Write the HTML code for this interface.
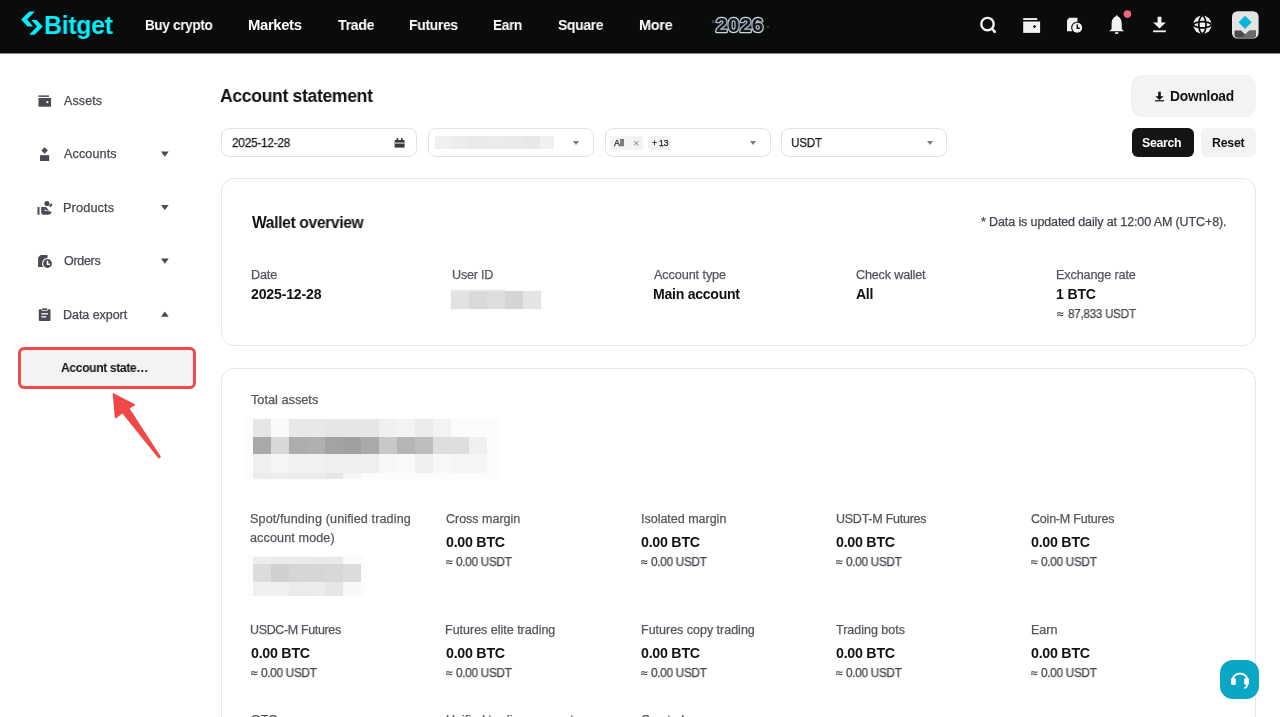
<!DOCTYPE html>
<html><head><meta charset="utf-8"><title>Account statement</title>
<style>
html,body{margin:0;padding:0;background:#fff;}
body{width:1280px;height:717px;overflow:hidden;position:relative;font-family:"Liberation Sans",sans-serif;}
.t{position:absolute;line-height:1;white-space:nowrap;will-change:transform;}
#hdr{position:absolute;left:0;top:0;width:1280px;height:53px;background:#0a0b0b;}
</style></head><body>
<div id="hdr"></div>
<div style="position:absolute;left:0;top:53px;width:1280px;height:1px;background:#8a8a8a"></div>
<div style="position:absolute;left:0;top:55px;width:1280px;height:1px;background:#f8f8f8"></div>
<svg style="position:absolute;left:0;top:0" width="130" height="53" viewBox="0 0 130 53">
<path fill="#00f0ff" d="M29.3 11.5 L34.8 11.5 L27.1 19.4 L33.1 26.4 L27.6 26.4 L21.2 19.4 Z M31.3 20.1 L36.6 20.1 L42.8 26.4 L34.6 34.7 L29.2 34.7 L37.1 26.4 Z"/>
</svg>
<div class="t" style="left:44.00px;top:13px;font-size:25.44px;font-weight:700;color:#00f0ff;letter-spacing:-0.35px;transform:scaleX(0.9817);transform-origin:0 0;">Bitget</div>
<div class="t" style="left:145.10px;top:18px;font-size:14.83px;font-weight:700;color:#ffffff;letter-spacing:-0.35px;transform:scaleX(0.9115);transform-origin:0 0;">Buy crypto</div>
<div class="t" style="left:248.40px;top:18px;font-size:14.83px;font-weight:700;color:#ffffff;letter-spacing:-0.35px;transform:scaleX(0.9942);transform-origin:0 0;">Markets</div>
<div class="t" style="left:337.50px;top:18px;font-size:14.83px;font-weight:700;color:#ffffff;letter-spacing:-0.35px;transform:scaleX(0.9548);transform-origin:0 0;">Trade</div>
<div class="t" style="left:409.00px;top:18px;font-size:14.83px;font-weight:700;color:#ffffff;letter-spacing:-0.35px;transform:scaleX(0.9391);transform-origin:0 0;">Futures</div>
<div class="t" style="left:493.40px;top:18px;font-size:14.83px;font-weight:700;color:#ffffff;letter-spacing:-0.35px;transform:scaleX(0.9182);transform-origin:0 0;">Earn</div>
<div class="t" style="left:557.75px;top:18px;font-size:14.83px;font-weight:700;color:#ffffff;letter-spacing:-0.35px;transform:scaleX(0.9386);transform-origin:0 0;">Square</div>
<div class="t" style="left:638.70px;top:18px;font-size:14.83px;font-weight:700;color:#ffffff;letter-spacing:-0.35px;transform:scaleX(0.9772);transform-origin:0 0;">More</div>
<svg style="position:absolute;left:700px;top:0;will-change:transform" width="80" height="53" viewBox="700 0 80 53">
<defs><linearGradient id="chr" x1="0" y1="0" x2="0" y2="1"><stop offset="0" stop-color="#e6ecf0"/><stop offset="0.5" stop-color="#9fb0bd"/><stop offset="1" stop-color="#dfe6ea"/></linearGradient></defs>
<text x="715.8" y="32" font-family="Liberation Sans" font-weight="700" font-size="21" letter-spacing="0.3" fill="#17191d" stroke="url(#chr)" stroke-width="2.6" stroke-linejoin="round" paint-order="stroke">2026</text>
<circle cx="713.2" cy="21.8" r="1.6" fill="#4a3a8a" opacity="0.8"/>
<circle cx="768" cy="27" r="1.2" fill="#555" opacity="0.6"/>
</svg>
<svg style="position:absolute;left:960px;top:0" width="320" height="53" viewBox="960 0 320 53">
<circle cx="987.5" cy="24.1" r="6.2" fill="none" stroke="#f2f2f4" stroke-width="2.4"/>
<path d="M992.2 28.8 L994.8 31.9" stroke="#f2f2f4" stroke-width="2.5" stroke-linecap="round"/>
<rect x="1023.2" y="18.1" width="14" height="1.9" fill="#f2f2f4"/>
<rect x="1023.2" y="21.5" width="16.9" height="11.4" fill="#f2f2f4"/>
<rect x="1033.3" y="25.4" width="2.4" height="2.4" transform="rotate(45 1034.5 26.6)" fill="#0a0b0b"/>
<path d="M1069.2 17.7 H1077.4 V21.65 A6.05 6.05 0 0 0 1072.3 31.2 H1067 V20.3 Z" fill="#f2f2f4"/>
<circle cx="1077.2" cy="27.7" r="4.95" fill="#f2f2f4"/>
<path d="M1077.3 24.4 V28.2 H1079.8" stroke="#0a0b0b" stroke-width="1.5" fill="none"/>
<path d="M1116.7 16 C1113 17 1111.6 20 1111.6 24.5 L1111.6 29 L1109.3 31.3 L1124 31.3 L1121.8 29 L1121.8 24.5 C1121.8 20 1120.4 17 1116.7 16 Z" fill="#f2f2f4"/>
<path d="M1114.8 32.2 A1.9 1.9 0 0 0 1118.6 32.2 Z" fill="#f2f2f4"/>
<rect x="1116" y="15.3" width="1.5" height="2" rx="0.5" fill="#f2f2f4"/>
<circle cx="1127.4" cy="14.1" r="3.8" fill="#f2657e"/>
<path d="M1157.6 16.7 H1161.4 V22.5 H1165.8 L1159.5 28.4 L1153.2 22.5 H1157.6 Z" fill="#f2f2f4"/>
<rect x="1153.1" y="30.4" width="12.8" height="1.8" fill="#f2f2f4"/>
<circle cx="1202.4" cy="24.7" r="9.15" fill="#f2f2f4"/>
<path d="M1202.4 15.4 C1197.6 18.6 1197.6 30.8 1202.4 34 M1202.4 15.4 C1207.2 18.6 1207.2 30.8 1202.4 34 M1193.1 24.7 C1196.4 20.6 1208.4 20.6 1211.7 24.7 M1193.1 24.7 C1196.4 28.8 1208.4 28.8 1211.7 24.7" stroke="#0a0b0b" stroke-width="1.7" fill="none"/>
<rect x="1232" y="11.2" width="26.6" height="27.4" rx="5.5" fill="#e4e4e4"/>
<path d="M1234.5 30.4 H1241 L1245.3 34.6 L1249.6 30.4 H1256 V35 Q1256 37.8 1253.2 37.8 H1237.2 Q1234.5 37.8 1234.5 35 Z" fill="#4a4a4a"/>
<path d="M1241.2 37.8 L1249.6 30.4 H1256 V35 Q1256 37.8 1253.2 37.8 Z" fill="#6a6a6a"/>
<path d="M1245.1 15.7 L1251.7 22.3 L1245.1 28.9 L1238.5 22.3 Z" fill="#0ab6d8"/>
</svg>
<div class="t" style="left:63.90px;top:95px;font-size:12.5px;-webkit-text-stroke:0.25px #46474e;color:#46474e;letter-spacing:0.1px;">Assets</div>
<div class="t" style="left:63.90px;top:148px;font-size:12.5px;-webkit-text-stroke:0.25px #46474e;color:#46474e;letter-spacing:0.12px;transform:scaleX(1.005);transform-origin:0 0;">Accounts</div>
<div class="t" style="left:62.90px;top:202px;font-size:12.5px;-webkit-text-stroke:0.25px #46474e;color:#46474e;letter-spacing:0.12px;transform:scaleX(1.0197);transform-origin:0 0;">Products</div>
<div class="t" style="left:63.90px;top:255px;font-size:12.5px;-webkit-text-stroke:0.25px #46474e;color:#46474e;letter-spacing:-0.3px;">Orders</div>
<div class="t" style="left:63.20px;top:309px;font-size:12.5px;-webkit-text-stroke:0.25px #46474e;color:#46474e;letter-spacing:-0.04px;">Data export</div>
<svg style="position:absolute;left:0;top:53px" width="210" height="420" viewBox="0 53 210 420">
<g fill="#4a4a52">
<rect x="38.5" y="95.4" width="10.6" height="1.5"/>
<rect x="38.5" y="98" width="12.6" height="8.7"/>
</g>
<rect x="46.4" y="101.2" width="1.9" height="1.9" fill="#fff"/>
<path d="M44.6 147.2 L47.9 150.5 L44.6 153.8 L41.3 150.5 Z" fill="#4a4a52"/>
<rect x="40" y="155.2" width="9.2" height="5.8" fill="#4a4a52"/>
<path d="M161 151.4 H168.7 L164.85 156.7 Z" fill="#4a4a52"/>
<path d="M161 204.9 H168.7 L164.85 210.2 Z" fill="#4a4a52"/>
<path d="M161 258.4 H168.7 L164.85 263.7 Z" fill="#4a4a52"/>
<path d="M161 316.8 H168.7 L164.85 311.5 Z" fill="#4a4a52"/>
<g fill="#4a4a52">
<rect x="37.5" y="207.1" width="2" height="7.6" rx="0.3"/>
<circle cx="47" cy="203.5" r="2.6"/>
<ellipse cx="50.8" cy="205.3" rx="1.15" ry="1.9" transform="rotate(40 50.8 205.3)"/>
<path d="M41.2 207.1 L45.8 207.1 L48.8 210.2 L48.3 210.9 L44.6 209.4 Q44 209.3 44.1 209.9 Q44.3 210.5 45 210.8 L51.7 211.8 Q51 214.7 48 214.7 L43.4 214.7 Q41.2 214.7 41.2 212.5 Z"/>
</g>
<path d="M40.6 255.1 H47.5 V258.1 A5.4 5.4 0 0 0 43.3 266.9 H38.1 V257.6 Z" fill="#4a4a52"/>
<circle cx="47.5" cy="263.5" r="4.4" fill="#4a4a52"/>
<path d="M47.5 260.6 V264.3 H50" stroke="#fff" stroke-width="1.5" fill="none"/>
<rect x="38.8" y="309.3" width="11.7" height="11.7" rx="1" fill="#4a4a52"/>
<rect x="41.8" y="308" width="5.7" height="2.6" rx="0.6" fill="#4a4a52" stroke="#fff" stroke-width="0.8"/>
<rect x="41.3" y="313.2" width="6.8" height="1.3" fill="#fff"/>
<rect x="41.3" y="316.2" width="4.8" height="1.3" fill="#fff"/>
<path d="M112.6 392.8 L134.8 404.2 Q135.6 404.8 134.8 405.4 L129.6 408.4 L160.8 456.6 Q160.6 458.6 158.6 458.6 L122.4 413.4 L116 418.2 Q115 418.6 114.8 417.6 Z" fill="#f04848"/>
</svg>
<div style="position:absolute;left:18.2px;top:347.3px;width:171.7px;height:35.3px;border:3px solid #f04a4a;border-radius:6px;background:#f3f3f5"></div>
<div class="t" style="left:61.10px;top:362px;font-size:12.65px;font-weight:700;color:#111111;letter-spacing:-0.35px;transform:scaleX(0.953);transform-origin:0 0;">Account state…</div>
<div class="t" style="left:220.00px;top:87px;font-size:18.46px;font-weight:700;color:#121212;letter-spacing:-0.35px;transform:scaleX(0.9536);transform-origin:0 0;">Account statement</div>
<div style="position:absolute;left:1130.5px;top:75px;width:125.4px;height:42.3px;border-radius:11px;background:#f3f3f5"></div>
<svg style="position:absolute;left:1150px;top:85px" width="20" height="20" viewBox="1150 85 20 20">
<path d="M1158.2 91.8 H1160.8 V96.2 H1163.6 L1159.5 100 L1155.4 96.2 H1158.2 Z" fill="#121212"/>
<rect x="1155" y="100.2" width="9" height="1.2" fill="#121212"/>
</svg>
<div class="t" style="left:1169.90px;top:90px;font-size:13.81px;font-weight:700;color:#121212;letter-spacing:-0.243px;">Download</div>
<div style="position:absolute;left:221.4px;top:128.3px;width:193.90px;height:26.40px;border:1px solid #e3e3e6;border-radius:8px;background:#fff"></div>
<div style="position:absolute;left:428.1px;top:128.3px;width:163.70px;height:26.40px;border:1px solid #e3e3e6;border-radius:8px;background:#fff"></div>
<div style="position:absolute;left:605px;top:128.3px;width:164.00px;height:26.40px;border:1px solid #e3e3e6;border-radius:8px;background:#fff"></div>
<div style="position:absolute;left:781.3px;top:128.3px;width:163.50px;height:26.40px;border:1px solid #e3e3e6;border-radius:8px;background:#fff"></div>
<div class="t" style="left:231.75px;top:136px;font-size:13.37px;-webkit-text-stroke:0.25px #1a1a1a;color:#1a1a1a;letter-spacing:-0.35px;transform:scaleX(0.8944);transform-origin:0 0;">2025-12-28</div>
<svg style="position:absolute;left:390px;top:133px" width="20" height="20" viewBox="390 133 20 20">
<rect x="394.6" y="140" width="10" height="7.6" fill="#3a3a40"/>
<rect x="394.6" y="142.6" width="10" height="0.9" fill="#fff"/>
<rect x="396.6" y="138" width="1.6" height="2.4" fill="#3a3a40"/>
<rect x="401" y="138" width="1.6" height="2.4" fill="#3a3a40"/>
</svg>
<div style="position:absolute;left:435.2px;top:135.6px;width:16.80000000000001px;height:13.3px;background:#efefef"></div>
<div style="position:absolute;left:452px;top:135.6px;width:16px;height:13.3px;background:#ececec"></div>
<div style="position:absolute;left:468px;top:135.6px;width:19px;height:13.3px;background:#e9e9e9"></div>
<div style="position:absolute;left:487px;top:135.6px;width:18px;height:13.3px;background:#ebebeb"></div>
<div style="position:absolute;left:505px;top:135.6px;width:18px;height:13.3px;background:#eaeaea"></div>
<div style="position:absolute;left:523px;top:135.6px;width:17px;height:13.3px;background:#e8e8e8"></div>
<div style="position:absolute;left:540px;top:135.6px;width:14px;height:13.3px;background:#f0f0f0"></div>
<svg style="position:absolute;left:573px;top:140.6px" width="6" height="4" viewBox="0 0 6 4"><path d="M0 0 H6 L3.0 4 Z" fill="#7a7a80"/></svg>
<svg style="position:absolute;left:749.8px;top:140.6px" width="6" height="4" viewBox="0 0 6 4"><path d="M0 0 H6 L3.0 4 Z" fill="#7a7a80"/></svg>
<svg style="position:absolute;left:926.5px;top:140.6px" width="6" height="4" viewBox="0 0 6 4"><path d="M0 0 H6 L3.0 4 Z" fill="#7a7a80"/></svg>
<div style="position:absolute;left:610.2px;top:136px;width:32.4px;height:13.6px;border-radius:3px;background:#f3f3f5"></div>
<div style="position:absolute;left:648.4px;top:136px;width:23.1px;height:13.6px;border-radius:3px;background:#f3f3f5"></div>
<div class="t" style="left:613.90px;top:139px;font-size:8.58px;-webkit-text-stroke:0.25px #1a1a1a;color:#1a1a1a;letter-spacing:0.12px;transform:scaleX(1.0281);transform-origin:0 0;">All</div>
<svg style="position:absolute;left:633px;top:140px" width="8" height="7" viewBox="633 140 8 7">
<path d="M634 141 L638.6 145.4 M638.6 141 L634 145.4" stroke="#777" stroke-width="0.9"/>
</svg>
<div class="t" style="left:651.50px;top:139px;font-size:8.58px;-webkit-text-stroke:0.25px #1a1a1a;color:#1a1a1a;letter-spacing:-0.167px;">+ 13</div>
<div class="t" style="left:790.84px;top:136px;font-size:13.3px;-webkit-text-stroke:0.25px #1a1a1a;color:#1a1a1a;letter-spacing:-0.35px;transform:scaleX(0.8854);transform-origin:0 0;">USDT</div>
<div style="position:absolute;left:1132.3px;top:128.4px;width:61.3px;height:28.2px;border-radius:6px;background:#141414"></div>
<div style="position:absolute;left:1201.1px;top:128.4px;width:54.8px;height:28.2px;border-radius:6px;background:#f3f3f5"></div>
<div class="t" style="left:1142.40px;top:137px;font-size:12.35px;font-weight:700;color:#ffffff;letter-spacing:-0.32px;">Search</div>
<div class="t" style="left:1212.00px;top:137px;font-size:12.35px;font-weight:700;color:#121212;letter-spacing:-0.25px;">Reset</div>
<div style="position:absolute;left:221.4px;top:178.4px;width:1032.6px;height:165.6px;border:1px solid #e5e6e8;border-radius:13px"></div>
<div style="position:absolute;left:221.4px;top:367.5px;width:1032.6px;height:500px;border:1px solid #e5e6e8;border-radius:13px"></div>
<div class="t" style="left:251.60px;top:215px;font-size:15.7px;font-weight:700;color:#121212;letter-spacing:-0.35px;transform:scaleX(0.9946);transform-origin:0 0;">Wallet overview</div>
<div class="t" style="left:981.30px;top:216px;font-size:12.5px;-webkit-text-stroke:0.25px #45454d;color:#45454d;letter-spacing:-0.116px;">* Data is updated daily at 12:00 AM (UTC+8).</div>
<div class="t" style="left:250.50px;top:269px;font-size:12.65px;-webkit-text-stroke:0.25px #55565d;color:#55565d;letter-spacing:-0.167px;">Date</div>
<div class="t" style="left:451.50px;top:269px;font-size:12.65px;-webkit-text-stroke:0.25px #55565d;color:#55565d;letter-spacing:-0.25px;">User ID</div>
<div class="t" style="left:654.25px;top:269px;font-size:12.65px;-webkit-text-stroke:0.25px #55565d;color:#55565d;letter-spacing:-0.091px;">Account type</div>
<div class="t" style="left:855.80px;top:269px;font-size:12.65px;-webkit-text-stroke:0.25px #55565d;color:#55565d;letter-spacing:-0.191px;">Check wallet</div>
<div class="t" style="left:1056.30px;top:269px;font-size:12.65px;-webkit-text-stroke:0.25px #55565d;color:#55565d;letter-spacing:-0.142px;">Exchange rate</div>
<div class="t" style="left:251.30px;top:287px;font-size:14.1px;font-weight:700;color:#121212;letter-spacing:-0.178px;">2025-12-28</div>
<div class="t" style="left:653.00px;top:287px;font-size:14.1px;font-weight:700;color:#121212;letter-spacing:-0.273px;">Main account</div>
<div class="t" style="left:856.00px;top:287px;font-size:14.1px;font-weight:700;color:#121212;letter-spacing:-0.35px;transform:scaleX(0.9816);transform-origin:0 0;">All</div>
<div class="t" style="left:1056.00px;top:287px;font-size:14.1px;font-weight:700;color:#121212;letter-spacing:-0.175px;">1 BTC</div>
<div class="t" style="left:1057.10px;top:308px;font-size:12.06px;-webkit-text-stroke:0.25px #46474e;color:#46474e;letter-spacing:0.12px;transform:scaleX(1.0333);transform-origin:0 0;">≈</div>
<div class="t" style="left:1067.50px;top:308px;font-size:12.79px;-webkit-text-stroke:0.25px #46474e;color:#46474e;letter-spacing:-0.35px;transform:scaleX(0.9195);transform-origin:0 0;">87,833 USDT</div>
<div style="position:absolute;left:450px;top:288.6px;width:93px;height:22px;background:#fcfcfc"></div>
<div style="position:absolute;left:451.2px;top:289.2px;width:53.6px;height:1.8px;background:#f0f0f0"></div>
<div style="position:absolute;left:451.3px;top:290.9px;width:18.0px;height:18.1px;background:#e2e2e2"></div>
<div style="position:absolute;left:469.3px;top:290.9px;width:18.0px;height:18.1px;background:#d9d9d9"></div>
<div style="position:absolute;left:487.3px;top:290.9px;width:18.0px;height:18.1px;background:#dddddd"></div>
<div style="position:absolute;left:505.3px;top:290.9px;width:18.0px;height:18.1px;background:#d4d4d4"></div>
<div style="position:absolute;left:523.3px;top:290.9px;width:18.0px;height:18.1px;background:#e4e4e4"></div>
<div class="t" style="left:251.30px;top:394px;font-size:12.79px;-webkit-text-stroke:0.25px #55565d;color:#55565d;letter-spacing:-0.018px;">Total assets</div>
<div style="position:absolute;left:244px;top:418px;width:256px;height:62px;background:#fcfcfc"></div>
<div style="position:absolute;left:252.50px;top:419.3px;width:18.33px;height:17.60px;background:#e6e6e6"></div>
<div style="position:absolute;left:270.53px;top:419.3px;width:18.33px;height:17.60px;background:#fafafa"></div>
<div style="position:absolute;left:288.56px;top:419.3px;width:18.33px;height:17.60px;background:#e8e8e8"></div>
<div style="position:absolute;left:306.59px;top:419.3px;width:18.33px;height:17.60px;background:#e8e8e8"></div>
<div style="position:absolute;left:324.62px;top:419.3px;width:18.33px;height:17.60px;background:#e6e6e6"></div>
<div style="position:absolute;left:342.65px;top:419.3px;width:18.33px;height:17.60px;background:#e6e6e6"></div>
<div style="position:absolute;left:360.68px;top:419.3px;width:18.33px;height:17.60px;background:#e6e6e6"></div>
<div style="position:absolute;left:378.72px;top:419.3px;width:18.33px;height:17.60px;background:#f0f0f0"></div>
<div style="position:absolute;left:396.75px;top:419.3px;width:18.33px;height:17.60px;background:#f3f3f3"></div>
<div style="position:absolute;left:414.78px;top:419.3px;width:18.33px;height:17.60px;background:#ebebeb"></div>
<div style="position:absolute;left:432.81px;top:419.3px;width:18.33px;height:17.60px;background:#f3f3f3"></div>
<div style="position:absolute;left:450.84px;top:419.3px;width:18.33px;height:17.60px;background:#fcfcfc"></div>
<div style="position:absolute;left:252.50px;top:436.6px;width:18.33px;height:18.10px;background:#a9a9a9"></div>
<div style="position:absolute;left:270.53px;top:436.6px;width:18.33px;height:18.10px;background:#d8d8d8"></div>
<div style="position:absolute;left:288.56px;top:436.6px;width:18.33px;height:18.10px;background:#adadad"></div>
<div style="position:absolute;left:306.59px;top:436.6px;width:18.33px;height:18.10px;background:#b0b0b0"></div>
<div style="position:absolute;left:324.62px;top:436.6px;width:18.33px;height:18.10px;background:#a3a3a3"></div>
<div style="position:absolute;left:342.65px;top:436.6px;width:18.33px;height:18.10px;background:#a0a0a0"></div>
<div style="position:absolute;left:360.68px;top:436.6px;width:18.33px;height:18.10px;background:#aaaaaa"></div>
<div style="position:absolute;left:378.72px;top:436.6px;width:18.33px;height:18.10px;background:#c8c8c8"></div>
<div style="position:absolute;left:396.75px;top:436.6px;width:18.33px;height:18.10px;background:#b5b5b5"></div>
<div style="position:absolute;left:414.78px;top:436.6px;width:18.33px;height:18.10px;background:#bdbdbd"></div>
<div style="position:absolute;left:432.81px;top:436.6px;width:18.33px;height:18.10px;background:#dedede"></div>
<div style="position:absolute;left:450.84px;top:436.6px;width:18.33px;height:18.10px;background:#dedede"></div>
<div style="position:absolute;left:468.87px;top:436.6px;width:18.33px;height:18.10px;background:#f0f0f0"></div>
<div style="position:absolute;left:252.50px;top:454.4px;width:18.33px;height:18.40px;background:#efefef"></div>
<div style="position:absolute;left:270.53px;top:454.4px;width:18.33px;height:18.40px;background:#f5f5f5"></div>
<div style="position:absolute;left:288.56px;top:454.4px;width:18.33px;height:18.40px;background:#f2f2f2"></div>
<div style="position:absolute;left:306.59px;top:454.4px;width:18.33px;height:18.40px;background:#f1f1f1"></div>
<div style="position:absolute;left:324.62px;top:454.4px;width:18.33px;height:18.40px;background:#efefef"></div>
<div style="position:absolute;left:342.65px;top:454.4px;width:18.33px;height:18.40px;background:#efefef"></div>
<div style="position:absolute;left:360.68px;top:454.4px;width:18.33px;height:18.40px;background:#efefef"></div>
<div style="position:absolute;left:378.72px;top:454.4px;width:18.33px;height:18.40px;background:#f8f8f8"></div>
<div style="position:absolute;left:396.75px;top:454.4px;width:18.33px;height:18.40px;background:#fafafa"></div>
<div style="position:absolute;left:414.78px;top:454.4px;width:18.33px;height:18.40px;background:#efefef"></div>
<div style="position:absolute;left:432.81px;top:454.4px;width:18.33px;height:18.40px;background:#f8f8f8"></div>
<div style="position:absolute;left:450.84px;top:454.4px;width:18.33px;height:18.40px;background:#f5f5f5"></div>
<div style="position:absolute;left:468.87px;top:454.4px;width:18.33px;height:18.40px;background:#f6f6f6"></div>
<div style="position:absolute;left:252.50px;top:472.5px;width:18.33px;height:6.10px;background:#ececec"></div>
<div style="position:absolute;left:270.53px;top:472.5px;width:18.33px;height:6.10px;background:#ececec"></div>
<div style="position:absolute;left:288.56px;top:472.5px;width:18.33px;height:6.10px;background:#ececec"></div>
<div style="position:absolute;left:306.59px;top:472.5px;width:18.33px;height:6.10px;background:#ececec"></div>
<div style="position:absolute;left:324.62px;top:472.5px;width:18.33px;height:6.10px;background:#e6e6e6"></div>
<div style="position:absolute;left:342.65px;top:472.5px;width:18.33px;height:6.10px;background:#f5f5f5"></div>
<div style="position:absolute;left:248px;top:555px;width:118px;height:42px;background:#fcfcfc"></div>
<div style="position:absolute;left:252.50px;top:557px;width:18.35px;height:7.30px;background:#ececec"></div>
<div style="position:absolute;left:270.55px;top:557px;width:18.35px;height:7.30px;background:#ebebeb"></div>
<div style="position:absolute;left:288.60px;top:557px;width:18.35px;height:7.30px;background:#ebebeb"></div>
<div style="position:absolute;left:306.65px;top:557px;width:18.35px;height:7.30px;background:#e8e8e8"></div>
<div style="position:absolute;left:324.70px;top:557px;width:18.35px;height:7.30px;background:#e9e9e9"></div>
<div style="position:absolute;left:342.75px;top:557px;width:18.35px;height:7.30px;background:#fafafa"></div>
<div style="position:absolute;left:252.50px;top:564px;width:18.35px;height:17.90px;background:#dcdcdc"></div>
<div style="position:absolute;left:270.55px;top:564px;width:18.35px;height:17.90px;background:#d0d0d0"></div>
<div style="position:absolute;left:288.60px;top:564px;width:18.35px;height:17.90px;background:#d6d6d6"></div>
<div style="position:absolute;left:306.65px;top:564px;width:18.35px;height:17.90px;background:#d6d6d6"></div>
<div style="position:absolute;left:324.70px;top:564px;width:18.35px;height:17.90px;background:#d8d8d8"></div>
<div style="position:absolute;left:342.75px;top:564px;width:18.35px;height:17.90px;background:#dcdcdc"></div>
<div style="position:absolute;left:252.50px;top:581.6px;width:18.35px;height:14.00px;background:#f0f0f0"></div>
<div style="position:absolute;left:270.55px;top:581.6px;width:18.35px;height:14.00px;background:#f0f0f0"></div>
<div style="position:absolute;left:288.60px;top:581.6px;width:18.35px;height:14.00px;background:#ebebeb"></div>
<div style="position:absolute;left:306.65px;top:581.6px;width:18.35px;height:14.00px;background:#ececec"></div>
<div style="position:absolute;left:324.70px;top:581.6px;width:18.35px;height:14.00px;background:#e6e6e6"></div>
<div style="position:absolute;left:342.75px;top:581.6px;width:18.35px;height:14.00px;background:#f8f8f8"></div>
<div class="t" style="left:249.90px;top:513px;font-size:12.5px;-webkit-text-stroke:0.25px #55565d;color:#55565d;letter-spacing:0.12px;transform:scaleX(1.0066);transform-origin:0 0;">Spot/funding (unified trading</div>
<div class="t" style="left:249.90px;top:532px;font-size:12.5px;-webkit-text-stroke:0.25px #55565d;color:#55565d;letter-spacing:0.12px;transform:scaleX(1.0066);transform-origin:0 0;">account mode)</div>
<div class="t" style="left:445.90px;top:513px;font-size:12.5px;-webkit-text-stroke:0.25px #55565d;color:#55565d;letter-spacing:-0.009px;">Cross margin</div>
<div class="t" style="left:445.60px;top:535px;font-size:14.24px;font-weight:700;color:#121212;letter-spacing:-0.257px;">0.00 BTC</div>
<div class="t" style="left:446.20px;top:556px;font-size:12.06px;-webkit-text-stroke:0.25px #46474e;color:#46474e;letter-spacing:0.12px;transform:scaleX(1.0333);transform-origin:0 0;">≈</div>
<div class="t" style="left:456.30px;top:556px;font-size:12.06px;-webkit-text-stroke:0.25px #46474e;color:#46474e;letter-spacing:-0.35px;transform:scaleX(0.9843);transform-origin:0 0;">0.00 USDT</div>
<div class="t" style="left:641.30px;top:513px;font-size:12.5px;-webkit-text-stroke:0.25px #55565d;color:#55565d;letter-spacing:-0.009px;">Isolated margin</div>
<div class="t" style="left:640.60px;top:535px;font-size:14.24px;font-weight:700;color:#121212;letter-spacing:-0.257px;">0.00 BTC</div>
<div class="t" style="left:641.20px;top:556px;font-size:12.06px;-webkit-text-stroke:0.25px #46474e;color:#46474e;letter-spacing:0.12px;transform:scaleX(1.0333);transform-origin:0 0;">≈</div>
<div class="t" style="left:651.30px;top:556px;font-size:12.06px;-webkit-text-stroke:0.25px #46474e;color:#46474e;letter-spacing:-0.35px;transform:scaleX(0.9843);transform-origin:0 0;">0.00 USDT</div>
<div class="t" style="left:836.00px;top:513px;font-size:12.5px;-webkit-text-stroke:0.25px #55565d;color:#55565d;letter-spacing:-0.249px;">USDT-M Futures</div>
<div class="t" style="left:835.60px;top:535px;font-size:14.24px;font-weight:700;color:#121212;letter-spacing:-0.257px;">0.00 BTC</div>
<div class="t" style="left:836.20px;top:556px;font-size:12.06px;-webkit-text-stroke:0.25px #46474e;color:#46474e;letter-spacing:0.12px;transform:scaleX(1.0333);transform-origin:0 0;">≈</div>
<div class="t" style="left:846.30px;top:556px;font-size:12.06px;-webkit-text-stroke:0.25px #46474e;color:#46474e;letter-spacing:-0.35px;transform:scaleX(0.9843);transform-origin:0 0;">0.00 USDT</div>
<div class="t" style="left:1031.20px;top:513px;font-size:12.5px;-webkit-text-stroke:0.25px #55565d;color:#55565d;letter-spacing:-0.209px;">Coin-M Futures</div>
<div class="t" style="left:1030.60px;top:535px;font-size:14.24px;font-weight:700;color:#121212;letter-spacing:-0.257px;">0.00 BTC</div>
<div class="t" style="left:1031.20px;top:556px;font-size:12.06px;-webkit-text-stroke:0.25px #46474e;color:#46474e;letter-spacing:0.12px;transform:scaleX(1.0333);transform-origin:0 0;">≈</div>
<div class="t" style="left:1041.30px;top:556px;font-size:12.06px;-webkit-text-stroke:0.25px #46474e;color:#46474e;letter-spacing:-0.35px;transform:scaleX(0.9843);transform-origin:0 0;">0.00 USDT</div>
<div class="t" style="left:250.10px;top:624px;font-size:12.5px;-webkit-text-stroke:0.25px #55565d;color:#55565d;letter-spacing:-0.359px;">USDC-M Futures</div>
<div class="t" style="left:250.60px;top:646px;font-size:14.24px;font-weight:700;color:#121212;letter-spacing:-0.257px;">0.00 BTC</div>
<div class="t" style="left:251.20px;top:667px;font-size:12.06px;-webkit-text-stroke:0.25px #46474e;color:#46474e;letter-spacing:0.12px;transform:scaleX(1.0333);transform-origin:0 0;">≈</div>
<div class="t" style="left:261.30px;top:667px;font-size:12.06px;-webkit-text-stroke:0.25px #46474e;color:#46474e;letter-spacing:-0.35px;transform:scaleX(0.9843);transform-origin:0 0;">0.00 USDT</div>
<div class="t" style="left:445.10px;top:624px;font-size:12.5px;-webkit-text-stroke:0.25px #55565d;color:#55565d;letter-spacing:-0.009px;">Futures elite trading</div>
<div class="t" style="left:445.60px;top:646px;font-size:14.24px;font-weight:700;color:#121212;letter-spacing:-0.257px;">0.00 BTC</div>
<div class="t" style="left:446.20px;top:667px;font-size:12.06px;-webkit-text-stroke:0.25px #46474e;color:#46474e;letter-spacing:0.12px;transform:scaleX(1.0333);transform-origin:0 0;">≈</div>
<div class="t" style="left:456.30px;top:667px;font-size:12.06px;-webkit-text-stroke:0.25px #46474e;color:#46474e;letter-spacing:-0.35px;transform:scaleX(0.9843);transform-origin:0 0;">0.00 USDT</div>
<div class="t" style="left:641.00px;top:624px;font-size:12.5px;-webkit-text-stroke:0.25px #55565d;color:#55565d;letter-spacing:-0.009px;">Futures copy trading</div>
<div class="t" style="left:640.60px;top:646px;font-size:14.24px;font-weight:700;color:#121212;letter-spacing:-0.257px;">0.00 BTC</div>
<div class="t" style="left:641.20px;top:667px;font-size:12.06px;-webkit-text-stroke:0.25px #46474e;color:#46474e;letter-spacing:0.12px;transform:scaleX(1.0333);transform-origin:0 0;">≈</div>
<div class="t" style="left:651.30px;top:667px;font-size:12.06px;-webkit-text-stroke:0.25px #46474e;color:#46474e;letter-spacing:-0.35px;transform:scaleX(0.9843);transform-origin:0 0;">0.00 USDT</div>
<div class="t" style="left:836.30px;top:624px;font-size:12.5px;-webkit-text-stroke:0.25px #55565d;color:#55565d;letter-spacing:-0.009px;">Trading bots</div>
<div class="t" style="left:835.60px;top:646px;font-size:14.24px;font-weight:700;color:#121212;letter-spacing:-0.257px;">0.00 BTC</div>
<div class="t" style="left:836.20px;top:667px;font-size:12.06px;-webkit-text-stroke:0.25px #46474e;color:#46474e;letter-spacing:0.12px;transform:scaleX(1.0333);transform-origin:0 0;">≈</div>
<div class="t" style="left:846.30px;top:667px;font-size:12.06px;-webkit-text-stroke:0.25px #46474e;color:#46474e;letter-spacing:-0.35px;transform:scaleX(0.9843);transform-origin:0 0;">0.00 USDT</div>
<div class="t" style="left:1030.50px;top:624px;font-size:12.5px;-webkit-text-stroke:0.25px #55565d;color:#55565d;letter-spacing:-0.009px;">Earn</div>
<div class="t" style="left:1030.60px;top:646px;font-size:14.24px;font-weight:700;color:#121212;letter-spacing:-0.257px;">0.00 BTC</div>
<div class="t" style="left:1031.20px;top:667px;font-size:12.06px;-webkit-text-stroke:0.25px #46474e;color:#46474e;letter-spacing:0.12px;transform:scaleX(1.0333);transform-origin:0 0;">≈</div>
<div class="t" style="left:1041.30px;top:667px;font-size:12.06px;-webkit-text-stroke:0.25px #46474e;color:#46474e;letter-spacing:-0.35px;transform:scaleX(0.9843);transform-origin:0 0;">0.00 USDT</div>
<div class="t" style="left:251.10px;top:714px;font-size:12.5px;-webkit-text-stroke:0.25px #55565d;color:#55565d;letter-spacing:-0.009px;">OTC</div>
<div class="t" style="left:445.90px;top:714px;font-size:12.5px;-webkit-text-stroke:0.25px #55565d;color:#55565d;letter-spacing:-0.009px;">Unified trading account</div>
<div class="t" style="left:641.30px;top:714px;font-size:12.5px;-webkit-text-stroke:0.25px #55565d;color:#55565d;letter-spacing:-0.009px;">Crypto loans</div>
<div style="position:absolute;left:1220.2px;top:659.9px;width:39.2px;height:39.2px;border-radius:13px;background:#0aa6c6"></div>
<svg style="position:absolute;left:1220px;top:660px" width="40" height="40" viewBox="1220 660 40 40">
<path d="M1232 681.5 A8 8 0 0 1 1248 681.5" stroke="#fff" stroke-width="1.9" fill="none"/>
<rect x="1231" y="678.3" width="4.8" height="6.6" rx="1.3" fill="#fff"/>
<rect x="1244.2" y="678.3" width="4.8" height="6.6" rx="1.3" fill="#fff"/>
<path d="M1247.2 684.5 Q1247.2 687.6 1244.6 688" stroke="#fff" stroke-width="1.5" fill="none" stroke-linecap="round"/>
</svg>
</body></html>
